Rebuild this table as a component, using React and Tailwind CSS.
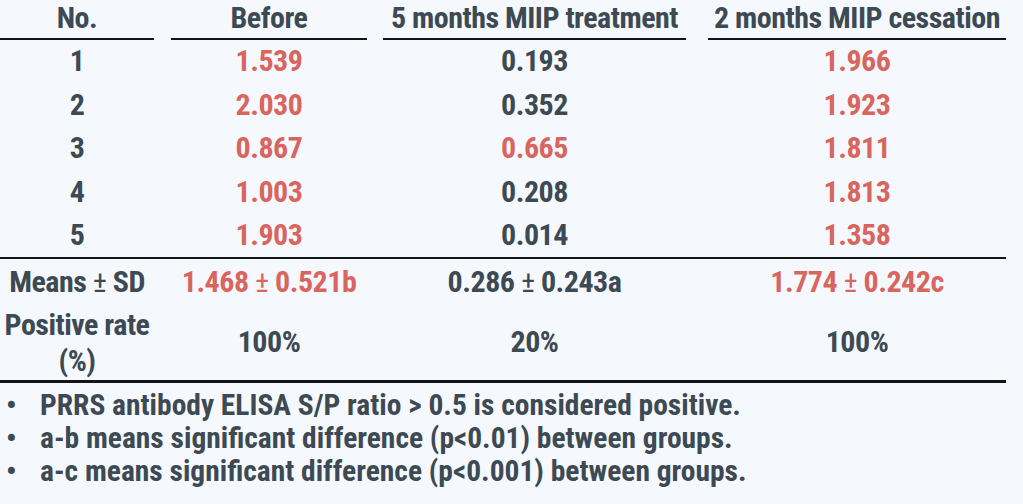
import React from "react";

const F = { fontFamily: '"Roboto Condensed", "Liberation Sans Narrow", "DejaVu Sans Condensed", sans-serif' };

const rows = [
  ["1", ["1.539", true], ["0.193", false], ["1.966", true]],
  ["2", ["2.030", true], ["0.352", false], ["1.923", true]],
  ["3", ["0.867", true], ["0.665", true], ["1.811", true]],
  ["4", ["1.003", true], ["0.208", false], ["1.813", true]],
  ["5", ["1.903", true], ["0.014", false], ["1.358", true]],
];

const cols = "grid grid-cols-[171px_212px_325px_298px]";

function Cell({ children, red, pr }) {
  return (
    <div className={`flex items-center justify-center whitespace-nowrap ${pr} ${red ? "text-[#d8665f]" : "text-[#3d4953]"}`}>
      <span>{children}</span>
    </div>
  );
}

function PM() {
  return <span className="font-normal">±</span>;
}

export default function App() {
  return (
    <div className="w-[1023px] h-[504px] bg-[#f5f9fd] overflow-hidden font-bold text-[#3d4953]" style={F}>
      <div className="w-[1006px] text-[30px] leading-none tracking-[-0.5px]">
        <div className={`${cols} h-[39.5px]`}>
          {[["No.", "pr-[17px]"], ["Before", "pr-[16px]"], ["5 months MIIP treatment", "pr-[22px]"], ["2 months MIIP cessation", ""]].map(([t, pr]) => (
            <div key={t} className={pr}>
              <div className="h-[39.5px] border-b-[2.5px] border-[#151515] flex items-start justify-center pt-[3px] whitespace-nowrap">{t}</div>
            </div>
          ))}
        </div>
        {rows.map((r) => (
          <div key={r[0]} className={`${cols} h-[43.5px]`}>
            <Cell pr="pr-[17px]">{r[0]}</Cell>
            <Cell pr="pr-[16px]" red={r[1][1]}>{r[1][0]}</Cell>
            <Cell pr="pr-[22px]" red={r[2][1]}>{r[2][0]}</Cell>
            <Cell red={r[3][1]}>{r[3][0]}</Cell>
          </div>
        ))}
        <div className={`${cols} h-[47px] border-t-[2.5px] border-[#151515]`}>
          <Cell pr="pr-[17px]">Means <PM /> SD</Cell>
          <Cell pr="pr-[16px]" red>1.468 <PM /> 0.521b</Cell>
          <Cell pr="pr-[22px]">0.286 <PM /> 0.243a</Cell>
          <Cell red>1.774 <PM /> 0.242c</Cell>
        </div>
        <div className={`${cols} h-[79px] border-b-[3px] border-[#151515]`}>
          <Cell pr="pr-[17px]"><div className="text-center leading-[36px] mt-[1px]">Positive rate<br />(%)</div></Cell>
          <Cell pr="pr-[16px]">100%</Cell>
          <Cell pr="pr-[22px]">20%</Cell>
          <Cell>100%</Cell>
        </div>
      </div>
      <ul className="pt-[6px] text-[29.5px] leading-[33px] text-[#3d4953]">
        {[
          "PRRS antibody ELISA S/P ratio > 0.5 is considered positive.",
          "a-b means significant difference (p<0.01) between groups.",
          "a-c means significant difference (p<0.001) between groups.",
        ].map((t) => (
          <li key={t} className="flex h-[33px] whitespace-nowrap">
            <span className="w-[40px] pl-[6px]">•</span>
            <span>{t}</span>
          </li>
        ))}
      </ul>
    </div>
  );
}
